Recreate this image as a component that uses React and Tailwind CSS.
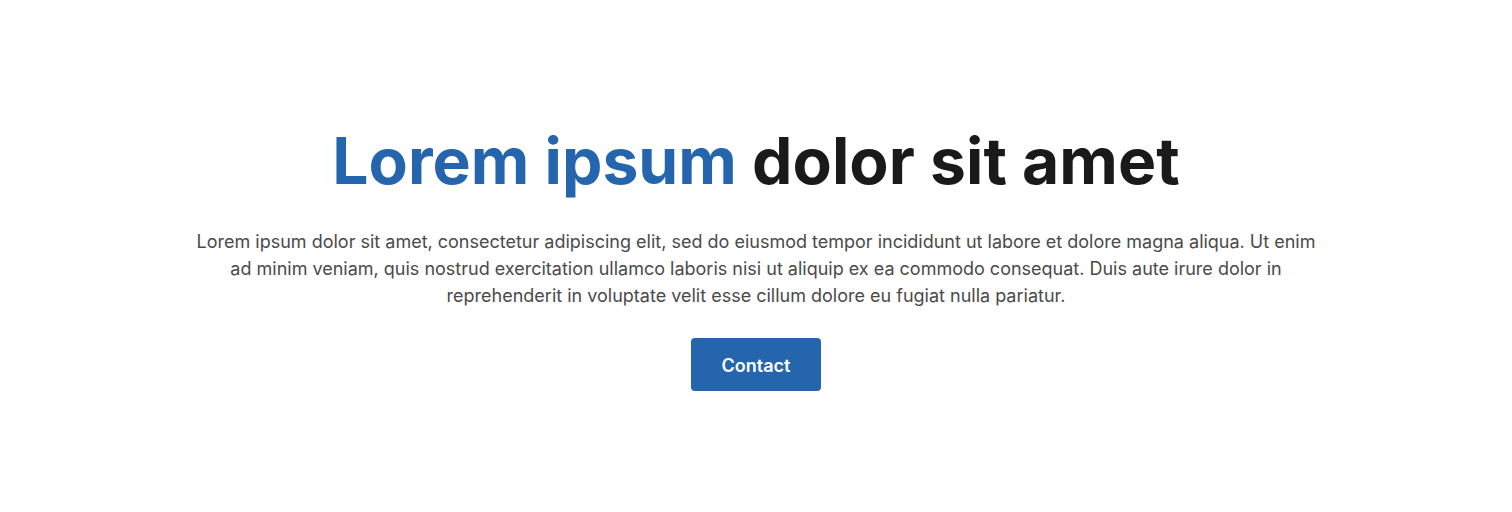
import React from 'react';

const App = () => {
  return (
    <div className="min-h-[512px] bg-white flex items-center justify-center font-['Inter',sans-serif]">
      <section className="flex flex-col items-center text-center px-6">
        {/* Heading */}
        <h1 className="text-[64.2px] leading-[80px] font-bold text-[#1a1a1a]">
          <span className="text-[#2565ad]">Lorem ipsum</span> dolor sit amet
        </h1>

        <p className="mt-[27px] max-w-[1135px] text-[18px] leading-[27px] text-[#4a4a4a]">
          Lorem ipsum dolor sit amet, consectetur adipiscing elit, sed do eiusmod tempor incididunt ut labore et dolore magna aliqua. Ut enim ad minim veniam, quis nostrud exercitation ullamco laboris nisi ut aliquip ex ea commodo consequat. Duis aute irure dolor in reprehenderit in voluptate velit esse cillum dolore eu fugiat nulla pariatur.
        </p>

        <button className="mt-[29px] w-[130px] h-[53px] pt-px rounded bg-[#2565ad] text-white font-semibold text-[18px]">
          Contact
        </button>
      </section>
    </div>
  );
};

export default App;
